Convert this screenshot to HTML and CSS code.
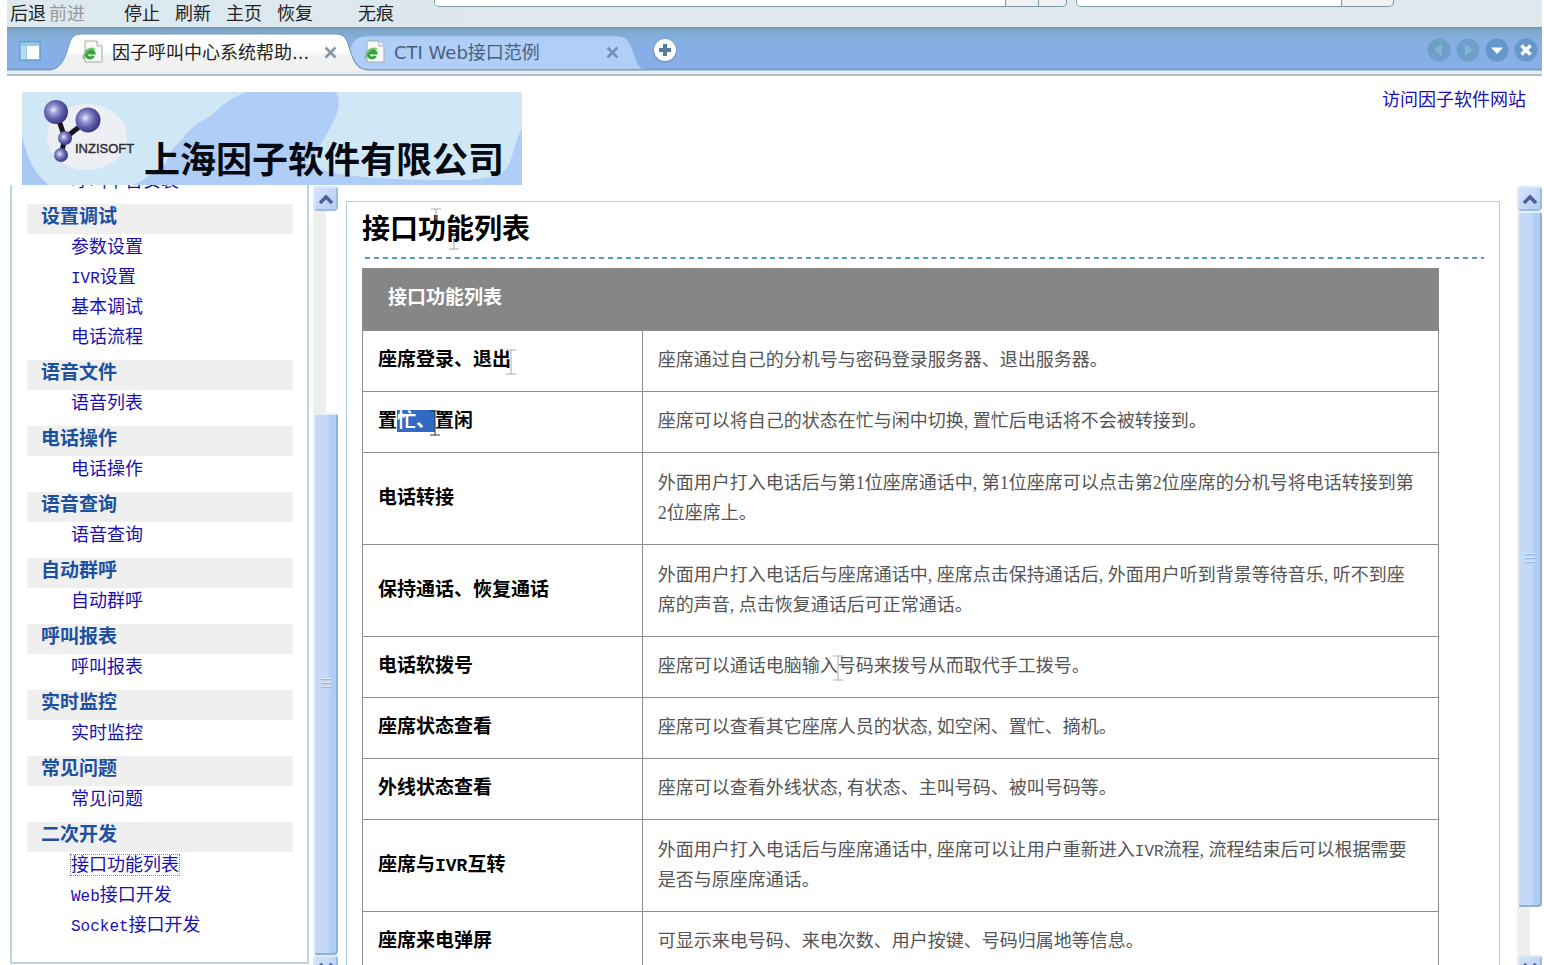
FILE: index.html
```html
<!DOCTYPE html>
<html lang="zh-CN">
<head>
<meta charset="utf-8">
<title>因子呼叫中心系统帮助</title>
<link rel="stylesheet" href="styles.css">
</head>
<body>
<div class="browser">
  <div class="toolbar">
    <div class="actions">
      <div class="pair"><button type="button">后退</button><button type="button" class="dim" disabled>前进</button></div>
      <div class="group">
        <button type="button">停止</button><button type="button">刷新</button><button type="button">主页</button><button type="button">恢复</button>
      </div>
      <button type="button">无痕</button>
    </div>
    <div class="field address"><input type="text" aria-label="地址"><button type="button" class="go" aria-label="收藏"></button><button type="button" class="menu" aria-label="转到"></button></div>
    <div class="field search"><input type="text" aria-label="搜索"><button type="button" class="find" aria-label="开始搜索"></button></div>
  </div>

  <div class="tabstrip">
    <button type="button" class="panel" aria-label="侧栏">
      <svg width="22" height="20" viewBox="0 0 22 20"><rect x="1" y="1" width="20" height="18" fill="#fff" stroke="#5fa0cb" stroke-width="1.5"/><rect x="2" y="2" width="18" height="3" fill="#8fcbed"/><rect x="2" y="5" width="5" height="13" fill="#b5dcf5"/><path d="M7.500 5v13" stroke="#9fcbe8"/></svg>
    </button>
    <div class="tab active">
      <svg class="shape" width="318" height="44" viewBox="0 0 318 44"><defs><linearGradient id="tw" x1="0" y1="0" x2="0" y2="1"><stop offset="0" stop-color="#fff"/><stop offset=".45" stop-color="#fff"/><stop offset=".6" stop-color="#f1f1f2"/><stop offset="1" stop-color="#f1f1f2"/></linearGradient></defs><path d="M0 43C9 42 13 35 16 27C20 16 20 7 31 7H286C296 7 297 14 300 23C304 36 307 42 318 43V44H0Z" fill="url(#tw)"/><path d="M0 43C9 42 13 35 16 27C20 16 20 7 31 7H286C296 7 297 14 300 23C304 36 307 42 318 43" fill="none" stroke="#6f99b8"/></svg>
      <svg class="page" width="22" height="24" viewBox="0 0 22 24"><path d="M3 1H15L20 6V22H3Z" fill="#f8faf8" stroke="#a3aaa8"/><path d="M15 1V6H20" fill="#fff" stroke="#a3aaa8"/><path d="M11.500 16A4 4 0 1 1 12 13H5" fill="none" stroke="#38a53c" stroke-width="3"/><path d="M2 19C-1 16 8 6 13 9" fill="none" stroke="#73c970" stroke-width="1.500"/></svg>
      <span class="label">因子呼叫中心系统帮助...</span>
      <button type="button" class="close" aria-label="关闭"><svg width="13" height="13" viewBox="0 0 13 13"><path d="M1.500 1.500 11.500 11.500M11.500 1.500 1.500 11.500" stroke="#8497a6" stroke-width="2.500"/></svg></button>
    </div>
    <div class="tab other">
      <svg class="shape" width="294" height="43" viewBox="0 0 294 43"><path d="M0 21C4 12 8 9 18 9H267C277 9 280 15 284 27C287 36 290 42 294 42H18C9 42 4 35 0 21Z" fill="#b0cff8"/><path d="M0 21C4 12 8 9 18 9H267C277 9 280 15 284 27C287 36 290 42 294 42" fill="none" stroke="#8fb4dc"/></svg>
      <svg class="page" width="22" height="24" viewBox="0 0 22 24"><path d="M3 1H15L20 6V22H3Z" fill="#f8faf8" stroke="#a3aaa8"/><path d="M15 1V6H20" fill="#fff" stroke="#a3aaa8"/><path d="M11.500 16A4 4 0 1 1 12 13H5" fill="none" stroke="#38a53c" stroke-width="3"/><path d="M2 19C-1 16 8 6 13 9" fill="none" stroke="#73c970" stroke-width="1.500"/></svg>
      <span class="label">CTI Web接口范例</span>
      <button type="button" class="close" aria-label="关闭"><svg width="13" height="13" viewBox="0 0 13 13"><path d="M1.500 1.500 11.500 11.500M11.500 1.500 1.500 11.500" stroke="#7590b4" stroke-width="2.500"/></svg></button>
    </div>
    <button type="button" class="round" aria-label="新标签"><svg width="26" height="26" viewBox="0 0 26 26"><circle cx="13" cy="13.500" r="12" fill="#6d9acb"/><circle cx="13" cy="13" r="11" fill="#fbfcfd"/><path d="M13 7V19M7 13H19" stroke="#577b9e" stroke-width="4"/></svg></button>
    <div class="windows">
      <button type="button" class="round" aria-label="上一个"><svg width="24" height="24" viewBox="0 0 24 24"><circle cx="12" cy="12" r="11.500" fill="#6d9fc9"/><path d="M15 6V18L7 12Z" fill="#84b3d3"/></svg></button>
      <button type="button" class="round" aria-label="下一个"><svg width="24" height="24" viewBox="0 0 24 24"><circle cx="12" cy="12" r="11.500" fill="#6d9fc9"/><path d="M9 6V18L17 12Z" fill="#84b3d3"/></svg></button>
      <button type="button" class="round" aria-label="标签列表"><svg width="24" height="24" viewBox="0 0 24 24"><circle cx="12" cy="12" r="11.500" fill="#6498ca"/><path d="M6 9.500H18L12 16Z" fill="#fff"/></svg></button>
      <button type="button" class="round" aria-label="关闭标签"><svg width="24" height="24" viewBox="0 0 24 24"><circle cx="12" cy="12" r="11.500" fill="#6498ca"/><path d="M7.500 7.500 16.500 16.500M16.500 7.500 7.500 16.500" stroke="#fff" stroke-width="3.500"/></svg></button>
    </div>
  </div>

  <header class="masthead">
    <svg class="banner" width="500" height="93" viewBox="0 0 500 93" role="img" aria-label="上海因子软件有限公司">
      <defs><radialGradient id="ball" cx=".4" cy=".42" r=".6"><stop offset="0" stop-color="#eeedfa"/><stop offset=".3" stop-color="#9698d2"/><stop offset=".65" stop-color="#5c5ca8"/><stop offset="1" stop-color="#373783"/></radialGradient></defs>
      <rect width="500" height="93" fill="#d0e8f6"/>
      <path d="M226 0H313C321 8 315 25 307 38C299 53 290 70 270 80H140L150 58C157 50 163 44 168 38C177 28 188 27 195 18C205 9 213 4 226 0Z" fill="#b0cdf8"/>
      <path d="M0 44C5 65 12 82 27 93H0Z" fill="#a9c9f5"/>
      <path d="M110 93C125 88 130 80 142 72H290C305 86 370 88 440 88C470 87 482 83 487 72C492 60 494 46 500 36V93Z" fill="#b0cdf8"/>
      <ellipse cx="65" cy="45" rx="40" ry="33" fill="#eeeff4"/>
      <path d="M34 20 43 46 66 28M43 46 39 63" fill="none" stroke="#15141d" stroke-width="5"/>
      <circle cx="34" cy="20" r="12" fill="url(#ball)"/><circle cx="66" cy="28" r="12.500" fill="url(#ball)"/><circle cx="43" cy="46" r="7" fill="url(#ball)"/><circle cx="39" cy="63" r="7" fill="url(#ball)"/>
      <text class="mark" x="53" y="61">INZISOFT</text>
      <text class="company" x="122" y="81">上海因子软件有限公司</text>
    </svg>
    <a href="#site" class="site">访问因子软件网站</a>
  </header>

  <div class="frames">
    <nav class="sidebar">
      <div class="scrolled">
        <ul><li><a href="#a">呼叫平台安装</a></li></ul>
        <h2>设置调试</h2>
        <ul><li><a href="#b">参数设置</a></li><li><a href="#c"><span class="latin">IVR</span>设置</a></li><li><a href="#d">基本调试</a></li><li><a href="#e">电话流程</a></li></ul>
        <h2>语音文件</h2>
        <ul><li><a href="#f">语音列表</a></li></ul>
        <h2>电话操作</h2>
        <ul><li><a href="#g">电话操作</a></li></ul>
        <h2>语音查询</h2>
        <ul><li><a href="#h">语音查询</a></li></ul>
        <h2>自动群呼</h2>
        <ul><li><a href="#i">自动群呼</a></li></ul>
        <h2>呼叫报表</h2>
        <ul><li><a href="#j">呼叫报表</a></li></ul>
        <h2>实时监控</h2>
        <ul><li><a href="#k">实时监控</a></li></ul>
        <h2>常见问题</h2>
        <ul><li><a href="#l">常见问题</a></li></ul>
        <h2>二次开发</h2>
        <ul><li><a href="#m" class="current">接口功能列表</a></li><li><a href="#n"><span class="latin">Web</span>接口开发</a></li><li><a href="#o"><span class="latin">Socket</span>接口开发</a></li></ul>
      </div>
    </nav>
    <div class="scrollbar left">
      <div class="arrow"><svg width="16" height="12" viewBox="0 0 16 12"><path d="M2 10 8 4 14 10" fill="none" stroke="#4d6096" stroke-width="3.500"/></svg></div>
      <div class="space"></div>
      <div class="thumb"><i class="grip"></i></div>
      <div class="arrow down"><svg width="16" height="12" viewBox="0 0 16 12"><path d="M2 2 8 8 14 2" fill="none" stroke="#4d6096" stroke-width="3.500"/></svg></div>
    </div>
    <main class="content">
      <article class="sheet">
        <h1>接口功能列表<svg class="caret one" width="12" height="20" viewBox="0 0 12 20"><path d="M1 1H11M6 1V12" stroke="#aaa" fill="none"/></svg><svg class="caret two" width="12" height="20" viewBox="0 0 12 20"><path d="M6 4V19M1 19H11" stroke="#aaa" fill="none"/></svg></h1>
        <table>
          <colgroup><col class="feature"><col></colgroup>
          <thead><tr><th colspan="2" scope="colgroup">接口功能列表</th></tr></thead>
          <tbody>
            <tr><th scope="row">座席登录、退出<svg class="caret" width="12" height="26" viewBox="0 0 12 26"><path d="M1 1H11M6 1V25M1 25H11" stroke="#aaa" fill="none"/></svg></th><td>座席通过自己的分机号与密码登录服务器、退出服务器。</td></tr>
            <tr><th scope="row">置<mark>忙、</mark><svg class="caret" width="12" height="26" viewBox="0 0 12 26"><path d="M1 1H11M6 1V25M1 25H11" stroke="#333" fill="none"/></svg>置闲</th><td>座席可以将自己的状态在忙与闲中切换, 置忙后电话将不会被转接到。</td></tr>
            <tr class="tall"><th scope="row">电话转接</th><td>外面用户打入电话后与第1位座席通话中, 第1位座席可以点击第2位座席的分机号将电话转接到第2位座席上。</td></tr>
            <tr class="tall"><th scope="row">保持通话、恢复通话</th><td>外面用户打入电话后与座席通话中, 座席点击保持通话后, 外面用户听到背景等待音乐, 听不到座席的声音, 点击恢复通话后可正常通话。</td></tr>
            <tr><th scope="row">电话软拨号</th><td>座席可以通话电脑输入<svg class="caret" width="12" height="26" viewBox="0 0 12 26"><path d="M1 1H11M6 1V25M1 25H11" stroke="#aaa" fill="none"/></svg>号码来拨号从而取代手工拨号。</td></tr>
            <tr><th scope="row">座席状态查看</th><td>座席可以查看其它座席人员的状态, 如空闲、置忙、摘机。</td></tr>
            <tr><th scope="row">外线状态查看</th><td>座席可以查看外线状态, 有状态、主叫号码、被叫号码等。</td></tr>
            <tr class="tall"><th scope="row">座席与<span class="latin">IVR</span>互转</th><td>外面用户打入电话后与座席通话中, 座席可以让用户重新进入<span class="latin">IVR</span>流程, 流程结束后可以根据需要是否与原座席通话。</td></tr>
            <tr><th scope="row">座席来电弹屏</th><td>可显示来电号码、来电次数、用户按键、号码归属地等信息。</td></tr>
          </tbody>
        </table>
      </article>
    </main>
    <div class="scrollbar right">
      <div class="arrow"><svg width="16" height="12" viewBox="0 0 16 12"><path d="M2 10 8 4 14 10" fill="none" stroke="#4d6096" stroke-width="3.500"/></svg></div>
      <div class="thumb"><i class="grip"></i></div>
      <div class="space"></div>
      <div class="arrow down"><svg width="16" height="12" viewBox="0 0 16 12"><path d="M2 2 8 8 14 2" fill="none" stroke="#4d6096" stroke-width="3.500"/></svg></div>
    </div>
  </div>
</div>
</body>
</html>
```

FILE: styles.css
```css
* { box-sizing: border-box; }
body {
  margin: 0;
  background: #fff;
  font-family: "Liberation Serif", "Noto Sans CJK SC", serif;
  font-size: 18px;
  line-height: 30px;
}
button { border: 0; padding: 0; background: none; font: inherit; color: inherit; }
svg { display: block; }
a { color: #1a10b0; text-decoration: none; }

.browser {
  display: flex;
  flex-direction: column;
  height: 100vh;
  padding: 0 2px 0 7px;
  overflow: hidden;
}

/* Toolbar */
.toolbar {
  display: flex;
  flex: none;
  height: 27px;
  padding: 0 148px 0 3px;
  background: linear-gradient(90deg, #dce9f1, #dee8ed 40%, #dfe8ed);
  color: #222;
  font-family: "Noto Sans CJK SC", sans-serif;
}
.actions { display: flex; width: 424px; height: 24px; line-height: 24px; }
.pair { display: flex; gap: 3px; width: 114px; }
.pair .dim { color: #999; }
.group { display: flex; gap: 15px; width: 234px; }
.field {
  display: flex;
  height: 7px;
  border: 1px solid #7f9aa3;
  border-top: 0;
  border-radius: 0 0 5px 5px;
  background: #eef1f3;
  overflow: hidden;
}
.field input { flex: 1; min-width: 0; height: 6px; padding: 0; border: 0; background: #fff; }
.field button { height: 6px; border-left: 1px solid #7f9aa3; }
.address { flex: 2 1 0; margin-right: 9px; }
.search { flex: 1 1 0; }
.go { width: 33px; }
.menu { width: 28px; }
.find { width: 52px; }

/* Tabs */
.tabstrip {
  display: flex;
  flex: none;
  align-items: center;
  height: 49px;
  padding: 0 4px 5px 12px;
  border-bottom: 2px solid #b3bcc4;
  background: linear-gradient(#7293a8 0, #7ea9cb 3px, #86afdf 13px, #87aee6 20px, #87aee6 41px, #7198b8 43px, #e4eff5 44px, #e4eff5 47px);
  font-family: "DejaVu Sans", "Noto Sans CJK SC", sans-serif;
}
.panel { width: 31px; padding-top: 6px; }
.tab { display: flex; align-items: center; position: relative; height: 43px; padding-top: 8px; }
.shape { position: absolute; left: 0; top: 0; z-index: -1; }
.active { z-index: 2; width: 318px; padding-left: 32px; isolation: isolate; color: #222; }
.other { z-index: 1; width: 294px; margin-left: -18px; padding-left: 14px; isolation: isolate; color: #4a5f7c; }
.label { width: 212px; margin-left: 8px; padding-top: 2px; white-space: nowrap; }
.round { flex: none; padding-top: 3px; }
.tab + .round { margin-left: 8px; }
.windows { display: flex; gap: 5px; margin-left: auto; }

/* Masthead */
.masthead {
  display: flex;
  flex: none;
  align-items: flex-start;
  justify-content: space-between;
  height: 109px;
  padding: 16px 16px 0 15px;
}
.mark { font: 13px "Liberation Sans", sans-serif; fill: #2c2c36; stroke: #2c2c36; stroke-width: .4px; }
.company { font: bold 36px "Noto Sans CJK SC", sans-serif; fill: #050a12; }
.site { line-height: 16px; }

/* Frames */
.frames { display: flex; flex: 1; min-height: 0; padding-left: 3px; }
.sidebar {
  flex: none;
  width: 299px;
  margin-right: 4px;
  margin-bottom: 1px;
  padding: 0 14px 0 15px;
  border: 2px solid #b8d5e8;
  border-top: 0;
  overflow: hidden;
}
/* List as seen part-way down its scroll range */
.scrolled { margin-top: -17px; }
.sidebar h2 {
  margin: 0;
  padding: 0 0 4px 14px;
  background: #efefef;
  color: #1c50a0;
  font-size: 19px;
  line-height: 26px;
}
.sidebar ul { margin: 0 0 6px; padding: 0 0 0 44px; list-style: none; }
.sidebar li { height: 30px; line-height: 26px; }
.current { outline: 1px dotted #888; }
.latin { font-family: "Liberation Mono", monospace; font-size: 16px; line-height: 1; }
th .latin { font-size: 18px; }

.scrollbar { display: flex; flex: none; flex-direction: column; width: 25px; padding-top: 1px; }
.arrow {
  display: flex;
  flex: none;
  align-items: center;
  justify-content: center;
  height: 25px;
  border: 2px solid #dbe9fa;
  border-right-color: #9fbdda;
  border-bottom-color: #9fbdda;
  border-radius: 4px;
  background: linear-gradient(135deg, #d6e3fb, #b3cdf6);
}
.space { background: linear-gradient(90deg, #eee 13px, #fff 13px); }
.thumb {
  display: flex;
  align-items: center;
  justify-content: center;
  border: 2px solid #e3f0fb;
  border-right-color: #93b1cb;
  border-bottom-color: #93b1cb;
  border-radius: 4px;
  background: linear-gradient(90deg, #c4d8f7 60%, #aecdf6 75%);
}
.grip { width: 10px; height: 12px; background: repeating-linear-gradient(#dfebfa 0 1px, #93b4e0 1px 2px, #c2d7f6 2px 4px); }
.left .space { flex: 203; }
.left .thumb { flex: 540; }
.arrow.down { margin-bottom: -15px; }
.right .space { flex: 48; }
.right .thumb { flex: 695; }

.content { flex: 1; min-width: 0; padding: 16px 17px 0 8px; overflow: hidden; }
.sheet { min-height: 900px; padding: 8px 15px; border: 1px solid #abcfe3; }
h1 {
  position: relative;
  margin: 0 0 9px;
  padding-bottom: 9px;
  background: repeating-linear-gradient(90deg, #fff 0 3px, #5d9bc0 3px 8px, #fff 8px 9px) left bottom / 100% 2px no-repeat;
  font-size: 28px;
  line-height: 40px;
}
h1 .caret { position: absolute; }
h1 .one { left: 68px; top: -2px; }
h1 .two { left: 86px; top: 20px; }

table { width: 96%; border-collapse: collapse; table-layout: fixed; color: #555; }
.feature { width: 26%; }
th, td { padding: 14px 23px 16px 15px; border: 1px solid #8c8c8c; text-align: left; }
tr.tall { height: 92px; }
thead th { padding: 14px 25px 17px; background: #868686; color: #fff; font-size: 19px; }
tbody th { color: #000; font-size: 19px; }
mark { padding-bottom: 1px; background: #316ac5; color: #fff; }
table .caret { display: inline-block; margin: -4px -6px; vertical-align: middle; }
```
